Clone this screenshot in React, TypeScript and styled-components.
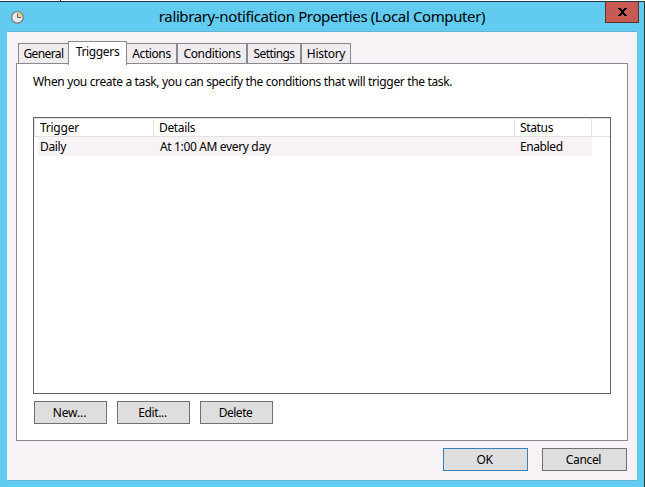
import React from "react";
import styled, { createGlobalStyle } from "styled-components";

const Global = createGlobalStyle`
  * { box-sizing: border-box; }
  body {
    margin: 0;
    overflow: hidden;
    background: #fff;
    color: #000;
    font: 12px/16px "Noto Sans", "Open Sans", sans-serif;
  }
`;

const Text = styled.span<{ $spacing?: number }>`
  white-space: nowrap;
  letter-spacing: ${(p) => p.$spacing ?? -0.35}px;
`;

const Page = styled.div`
  width: 645px;
  height: 487px;
  display: flex;
  flex-direction: column;
`;

const Backdrop = styled.div`
  height: 1px;
  padding-left: 60px;
  &::before {
    content: "";
    display: block;
    width: 1px;
    height: 1px;
    background: #222;
  }
`;

const Window = styled.div`
  flex: 1;
  display: flex;
  flex-direction: column;
  border-top: 1px solid #24363e;
  border-right: 1px solid #24363e;
  background: #62cbf0;
  padding: 0 7px 6px 7px;
`;

const TitleBar = styled.header`
  height: 29px;
  flex: none;
  display: grid;
  grid-template-columns: 34px 1fr 34px;
  margin-right: -2px;
`;

const IconSlot = styled.div`
  padding: 8px 0 0 3px;
  svg { display: block; }
`;

const Title = styled.h1`
  margin: 0;
  padding: 3px 2px 0 0;
  font-size: 15px;
  line-height: 22px;
  font-weight: 400;
  text-align: center;
`;

const CloseButton = styled.button`
  width: 34px;
  height: 21px;
  padding: 0;
  border: 1px solid #60322f;
  border-top: 0;
  background: #c75b53;
  display: flex;
  justify-content: center;
  align-items: center;
`;

const Body = styled.main`
  flex: 1;
  display: flex;
  flex-direction: column;
  border-top: 1px solid #66b3d2;
  border-bottom: 1px solid #66b3d2;
  background: #f7f2f6;
  padding: 9px;
`;

const Tabs = styled.div`
  height: 23px;
  flex: none;
  display: flex;
  align-items: flex-end;
  padding-left: 2px;
  margin-bottom: -1px;
`;

const Tab = styled.div<{ $width: number; $active?: boolean; $joined?: boolean }>`
  width: ${(p) => p.$width}px;
  height: ${(p) => (p.$active ? 24 : 21)}px;
  margin-bottom: ${(p) => (p.$active ? -1 : 0)}px;
  margin-left: ${(p) => (p.$joined ? -1 : 0)}px;
  border: 1px solid #898990;
  border-bottom: ${(p) => (p.$active ? 0 : "1px solid #898990")};
  background: ${(p) => (p.$active ? "#fff" : "#efebef")};
  z-index: ${(p) => (p.$active ? 2 : 1)};
  display: flex;
  justify-content: center;
  line-height: 20px;
`;

const Panel = styled.section`
  height: 378px;
  width: 612px;
  flex: none;
  border: 1px solid #898990;
  background: #fff;
  padding: 10px 16px 16px;
  display: flex;
  flex-direction: column;
`;

const Intro = styled.p`
  margin: 0;
  height: 43px;
`;

const List = styled.div`
  height: 277px;
  width: 578px;
  border: 1px solid #646468;
`;

const HeaderRow = styled.div`
  display: grid;
  grid-template-columns: 119px 361px 77px 1fr;
  height: 19px;
  border: 1px solid #e5e1e5;
  border-right: 0;
`;

const HeaderCell = styled.div`
  padding-left: 5px;
  line-height: 17px;
  border-right: 1px solid #e5e1e5;
  &:last-child { border-right: 0; }
`;

const Row = styled.div`
  display: grid;
  grid-template-columns: 120px 360px 1fr;
  width: 554px;
  height: 19px;
  margin-left: 4px;
  background: #f7f2f6;
`;

const Cell = styled.div`
  padding-left: 2px;
  line-height: 19px;
`;

const ListActions = styled.div`
  display: flex;
  gap: 10px;
  padding: 7px 0 0 1px;
`;

const DialogActions = styled.footer`
  display: flex;
  justify-content: flex-end;
  gap: 14px;
  padding: 7px 1px 0 0;
`;

const Button = styled.button<{ $width: number; $primary?: boolean }>`
  width: ${(p) => p.$width}px;
  height: 23px;
  padding: 0 2px 0 0;
  border: 1px solid ${(p) => (p.$primary ? "#3a80ba" : "#707073")};
  background: #dedede;
  color: #000;
  font: inherit;
  line-height: 21px;
`;

const ClockIcon = () => (
  <svg width="14" height="14" viewBox="0 0 14 14">
    <circle cx="7.4" cy="7.4" r="5.8" fill="#e6ebee" stroke="#7c8487" strokeWidth="1.4" />
    <path d="M7.5 7.5V2.4a5 5 0 0 1 5 5.1z" fill="#f6c97c" />
    <path d="M7.5 3.5v4H11" fill="none" stroke="#5d666c" />
  </svg>
);

const CloseIcon = () => (
  <svg width="9" height="8" viewBox="0 0 9 8" shapeRendering="crispEdges">
    <path
      d="M0 0h3v1h1v1h1V1h1V0h3v1H8v1H7v1H6v2h1v1h1v1h1v1H6V7H5V6H4v1H3v1H0V7h1V6h1V5h1V3H2V2H1V1H0z"
      fill="#000"
    />
  </svg>
);

export default function App() {
  return (
    <>
      <Global />
      <Page>
        <Backdrop />
        <Window>
          <TitleBar>
            <IconSlot><ClockIcon /></IconSlot>
            <Title><Text $spacing={-0.38}>ralibrary-notification Properties (Local Computer)</Text></Title>
            <CloseButton aria-label="Close"><CloseIcon /></CloseButton>
          </TitleBar>
          <Body>
            <Tabs>
              <Tab $width={51}><Text $spacing={-0.6}>General</Text></Tab>
              <Tab $width={59} $active $joined><Text>Triggers</Text></Tab>
              <Tab $width={51} $joined><Text $spacing={-0.4}>Actions</Text></Tab>
              <Tab $width={70}><Text>Conditions</Text></Tab>
              <Tab $width={54}><Text $spacing={-0.6}>Settings</Text></Tab>
              <Tab $width={50}><Text $spacing={-0.3}>History</Text></Tab>
            </Tabs>
            <Panel>
              <Intro>
                <Text>When you create a task, you can specify the conditions that will trigger the task.</Text>
              </Intro>
              <List>
                <HeaderRow>
                  <HeaderCell><Text $spacing={-0.25}>Trigger</Text></HeaderCell>
                  <HeaderCell><Text>Details</Text></HeaderCell>
                  <HeaderCell><Text>Status</Text></HeaderCell>
                  <HeaderCell />
                </HeaderRow>
                <Row>
                  <Cell><Text>Daily</Text></Cell>
                  <Cell><Text>At 1:00 AM every day</Text></Cell>
                  <Cell><Text $spacing={-0.4}>Enabled</Text></Cell>
                </Row>
              </List>
              <ListActions>
                <Button $width={73}><Text $spacing={-0.1}>New...</Text></Button>
                <Button $width={73}><Text>Edit...</Text></Button>
                <Button $width={73}><Text $spacing={-0.5}>Delete</Text></Button>
              </ListActions>
            </Panel>
            <DialogActions>
              <Button $width={85} $primary><Text>OK</Text></Button>
              <Button $width={85}><Text>Cancel</Text></Button>
            </DialogActions>
          </Body>
        </Window>
      </Page>
    </>
  );
}
